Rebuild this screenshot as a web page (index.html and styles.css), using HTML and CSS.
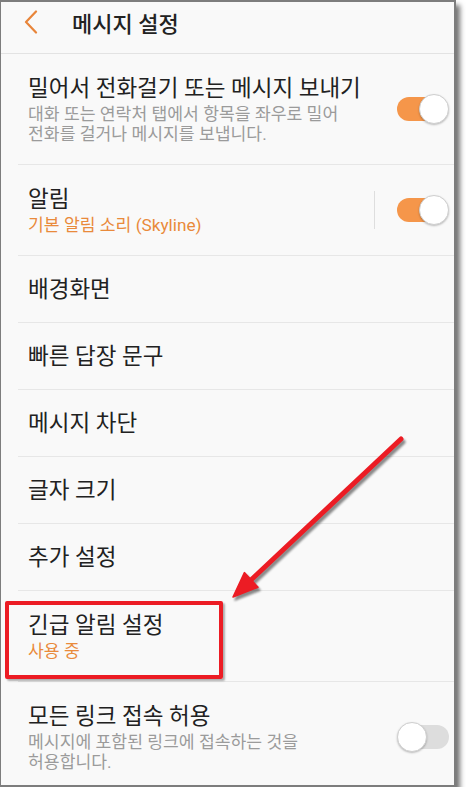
FILE: index.html
```html
<!DOCTYPE html>
<html lang="ko">
<head>
<meta charset="utf-8">
<title>메시지 설정</title>
<link rel="stylesheet" href="styles.css">
</head>
<body>
<div class="frame">
  <header class="appbar">
    <svg class="back" width="14" height="24" viewBox="0 0 14 24"><polyline points="12,1.5 2,12 12,22.5" fill="none" stroke="#e8853a" stroke-width="2.2" stroke-linecap="round" stroke-linejoin="round"/></svg>
    <h1 class="appbar-title">메시지 설정</h1>
  </header>
  <ul class="list">
    <li class="item two">
      <div class="text">
        <div class="title">밀어서 전화걸기 또는 메시지 보내기</div>
        <div class="sub">대화 또는 연락처 탭에서 항목을 좌우로 밀어 전화를 걸거나 메시지를 보냅니다.</div>
      </div>
      <span class="switch on"></span>
    </li>
    <li class="item two">
      <div class="text">
        <div class="title">알림</div>
        <div class="sub accent">기본 알림 소리 (Skyline)</div>
      </div>
      <span class="vline"></span>
      <span class="switch on near"></span>
    </li>
    <li class="item"><div class="text"><div class="title">배경화면</div></div></li>
    <li class="item"><div class="text"><div class="title">빠른 답장 문구</div></div></li>
    <li class="item"><div class="text"><div class="title">메시지 차단</div></div></li>
    <li class="item"><div class="text"><div class="title">글자 크기</div></div></li>
    <li class="item"><div class="text"><div class="title">추가 설정</div></div></li>
    <li class="item two">
      <div class="text">
        <div class="title">긴급 알림 설정</div>
        <div class="sub accent">사용 중</div>
      </div>
    </li>
    <li class="item two">
      <div class="text">
        <div class="title">모든 링크 접속 허용</div>
        <div class="sub">메시지에 포함된 링크에 접속하는 것을 허용합니다.</div>
      </div>
      <span class="switch off"></span>
    </li>
  </ul>
  <div class="highlight"></div>
  <svg class="arrow" width="456" height="787" viewBox="0 0 456 787">
    <line x1="401" y1="439" x2="251" y2="580" stroke="#ec1c24" stroke-width="5" stroke-linecap="round"/>
    <polygon points="233,597 244.4,572.6 258,587.2" fill="#ec1c24" stroke="#ec1c24" stroke-width="1.5" stroke-linejoin="round"/>
  </svg>
</div>
</body>
</html>
```
FILE: styles.css
```css
html, body {
  margin: 0;
  background: #ffffff;
}

body {
  font-family: Roboto, "Noto Sans CJK KR", sans-serif;
}

.frame {
  position: relative;
  width: 456px;
  height: 787px;
  box-sizing: border-box;
  border-style: solid;
  border-color: #7d7d7d;
  border-width: 2px 2px 2px 1px;
  background: #f9f9f9;
  box-shadow: 4px 5px 5px rgba(0, 0, 0, 0.55);
  overflow: hidden;
}

.appbar {
  display: flex;
  align-items: center;
  height: 40px;
  padding: 0 0 11px 23px;
  border-bottom: 1px solid #e3e3e3;
}

.back {
  flex: none;
  display: block;
}

.appbar-title {
  margin: 0 0 0 34px;
  font-size: 22px;
  font-weight: 500;
  color: #222222;
}

.list {
  list-style: none;
  margin: 0;
  padding: 0;
}

.item {
  display: flex;
  align-items: center;
  margin-left: 17px;
  padding: 19px 5px 19px 10px;
  border-bottom: 1px solid #e7e7e7;
}

.item.two {
  padding-top: 20px;
  padding-bottom: 20px;
}

.text {
  flex: 1;
  min-width: 0;
}

.title {
  font-size: 22.5px;
  line-height: 28px;
  color: #212121;
  white-space: nowrap;
}

.sub {
  margin-top: 2px;
  font-size: 17.2px;
  line-height: 20px;
  color: #9b9b9b;
  word-break: keep-all;
}

.sub.accent {
  color: #e98a3b;
}

.vline {
  flex: none;
  width: 1px;
  height: 38px;
  background: #dedede;
}

.switch {
  position: relative;
  flex: none;
  width: 52px;
  height: 30px;
  margin-left: 30px;
}

.switch.near {
  margin-left: 22px;
}

.switch::before {
  content: "";
  position: absolute;
  left: 0;
  top: 3px;
  width: 46px;
  height: 24px;
  border-radius: 12px;
  background: #f5964a;
}

.switch::after {
  content: "";
  position: absolute;
  right: 0;
  top: 0;
  width: 28px;
  height: 28px;
  border-radius: 50%;
  background: #ffffff;
  border: 1px solid #cfcfcf;
  box-shadow: 0 1px 2px rgba(0, 0, 0, 0.25);
}

.switch.off::before {
  left: auto;
  right: 0;
  background: #dddddd;
}

.switch.off::after {
  right: auto;
  left: 0;
}

.highlight {
  position: absolute;
  left: 4px;
  top: 599px;
  width: 218px;
  height: 78px;
  box-sizing: border-box;
  border: 4px solid #ec1c24;
  border-radius: 2px;
  box-shadow: 2px 2px 2px rgba(0, 0, 0, 0.3);
}

.arrow {
  position: absolute;
  left: -1px;
  top: -2px;
  filter: drop-shadow(2px 3px 1px rgba(0, 0, 0, 0.45));
}
```
